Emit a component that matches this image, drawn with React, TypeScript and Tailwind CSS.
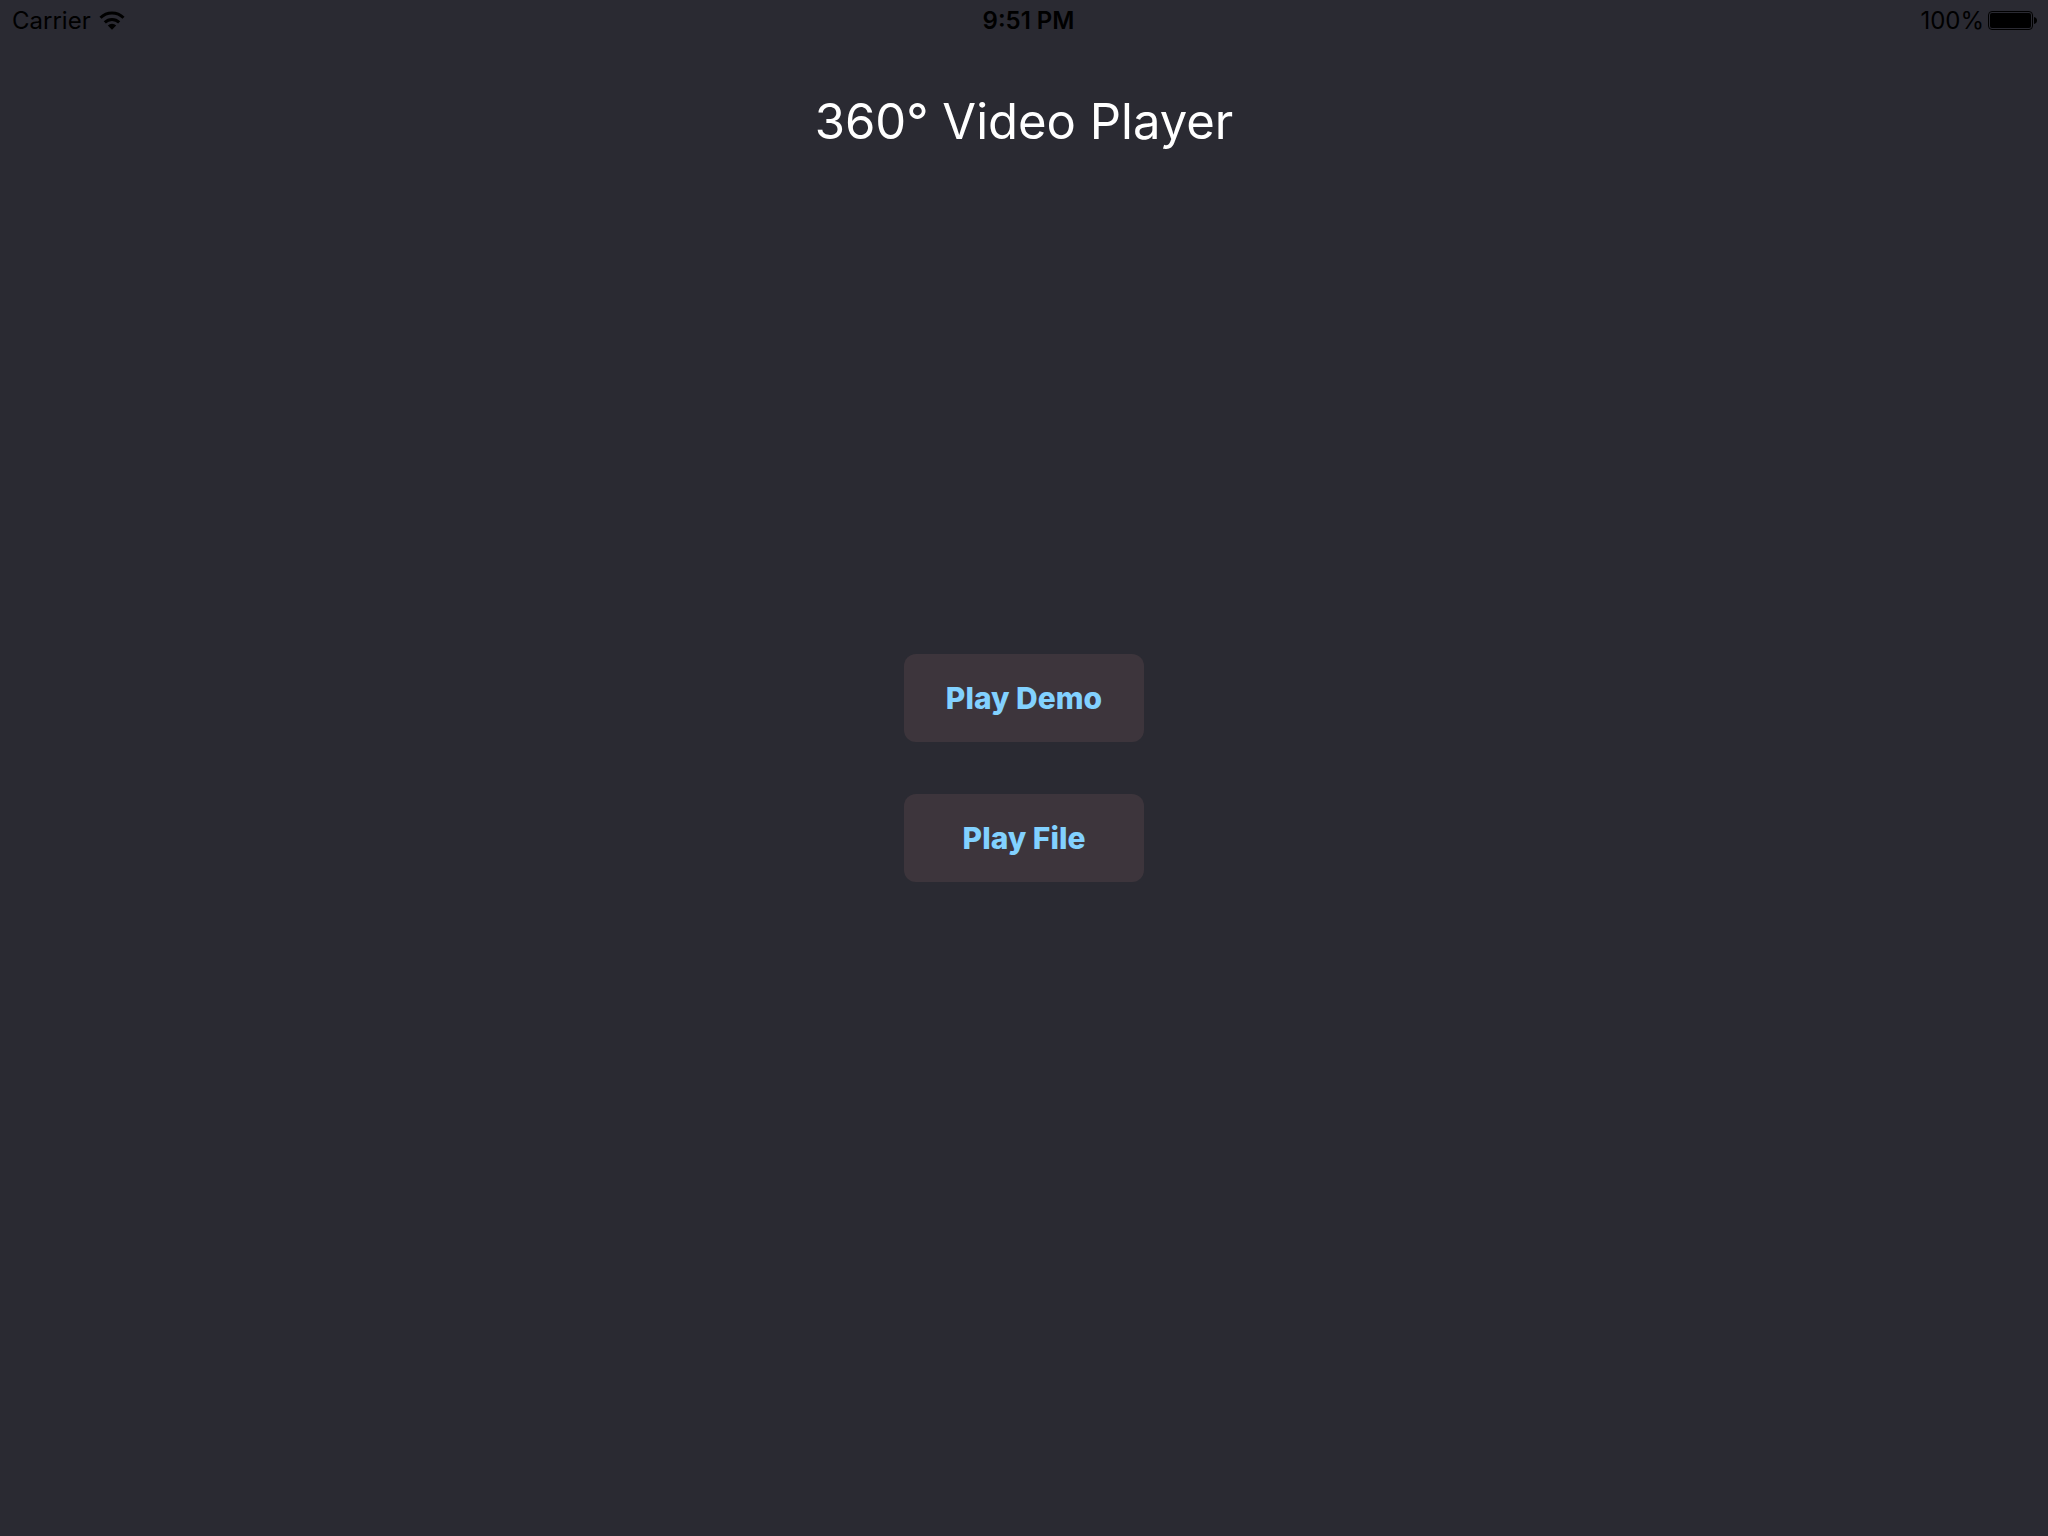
import React from "react";

function WifiIcon() {
  return (
    <svg width="26" height="20" viewBox="0 0 26 20" fill="none" stroke="#000" aria-hidden="true">
      <path d="M1.500 6.800a16.300 16.300 0 0 1 23 0" strokeWidth="3" />
      <path d="M5.800 11.400a10.300 10.300 0 0 1 14.400 0" strokeWidth="3" />
      <path d="M13 18.800l-4.200-4.400a6 6 0 0 1 8.400 0z" fill="#000" stroke="none" />
    </svg>
  );
}

function BatteryIcon() {
  return (
    <svg width="49" height="20" viewBox="0 0 49 20" aria-hidden="true">
      <rect x="0.5" y="0.5" width="44" height="18" rx="3.5" fill="none" stroke="#000" />
      <rect x="2" y="2" width="41" height="15" rx="2" fill="#000" />
      <path d="M46 6c2 .5 3 1.800 3 3.500s-1 3-3 3.500z" fill="#000" />
    </svg>
  );
}

function ActionButton({ label }: { label: string }) {
  return (
    <button
      type="button"
      className="h-22 w-60 rounded-xl bg-[#3d353c] text-3xl font-extrabold text-[#82d1ff]"
    >
      {label}
    </button>
  );
}

export default function App() {
  return (
    <div className="flex min-h-screen flex-col bg-[#2a2a32] font-['Inter',sans-serif]">
      <header className="grid h-[42px] grid-cols-[1fr_auto_1fr] items-center pr-[11px] pl-3 text-2xl text-black">
        <div className="flex items-center gap-2">
          <span>Carrier</span>
          <WifiIcon />
        </div>
        <time className="pl-2 font-semibold">9:51 PM</time>
        <div className="flex items-center justify-end gap-1">
          <span>100%</span>
          <BatteryIcon />
        </div>
      </header>
      <h1 className="mt-12 text-center text-[49px] leading-[64px] text-white">360° Video Player</h1>
      <main className="flex flex-1 flex-col items-center justify-center gap-13 pb-[154px]">
        <ActionButton label="Play Demo" />
        <ActionButton label="Play File" />
      </main>
    </div>
  );
}
